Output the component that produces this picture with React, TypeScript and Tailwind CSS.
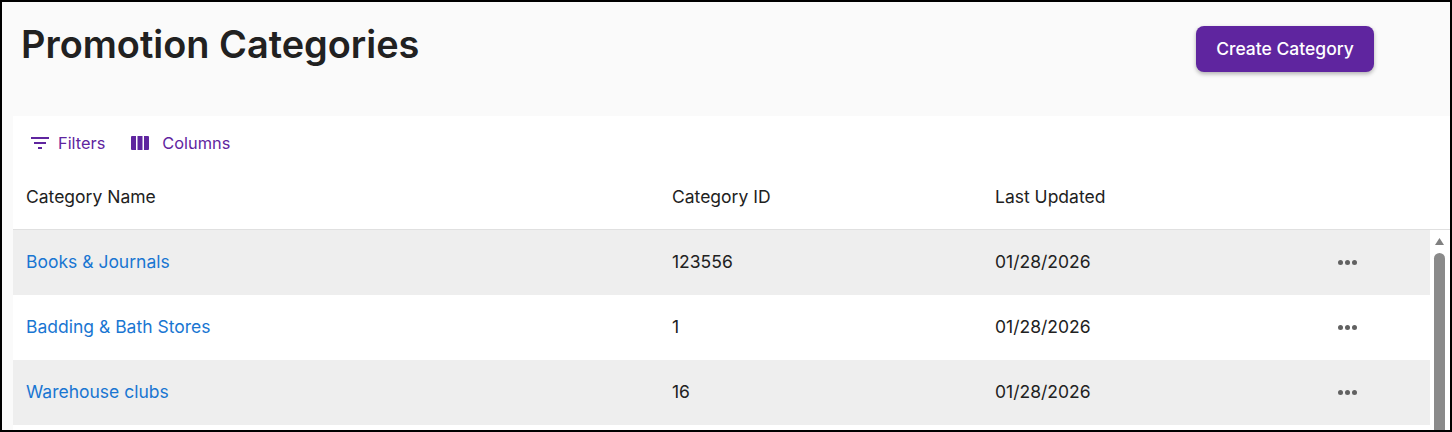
const rows = [
  { name: "Books & Journals", id: "123556", updated: "01/28/2026", shaded: true },
  { name: "Badding & Bath Stores", id: "1", updated: "01/28/2026", shaded: false },
  { name: "Warehouse clubs", id: "16", updated: "01/28/2026", shaded: true },
];

function FilterIcon() {
  return (
    <svg width="18" height="12" viewBox="0 0 18 12" className="fill-[#5f259f]">
      <rect x="0" y="0" width="18" height="2" />
      <rect x="3" y="5" width="12" height="2" />
      <rect x="7" y="10" width="4" height="2" />
    </svg>
  );
}

function ColumnsIcon() {
  return (
    <svg width="18" height="14" viewBox="0 0 18 14" className="fill-[#5f259f]">
      <path d="M0 1a1 1 0 0 1 1-1h4v14H1a1 1 0 0 1-1-1z" />
      <rect x="6.5" y="0" width="5" height="14" />
      <path d="M13 0h4a1 1 0 0 1 1 1v12a1 1 0 0 1-1 1h-4z" />
    </svg>
  );
}

function Dots() {
  return (
    <div className="flex items-center gap-[2px] ml-[1px]">
      <span className="w-[5px] h-[5px] rounded-full bg-[#616161]" />
      <span className="w-[5px] h-[5px] rounded-full bg-[#616161]" />
      <span className="w-[5px] h-[5px] rounded-full bg-[#616161]" />
    </div>
  );
}

export default function App() {
  return (
    <div className="w-[1452px] h-[432px] overflow-hidden border-2 border-black bg-[#fafafa] font-['Inter',sans-serif] text-[#212121]">
      <div className="flex items-start justify-between h-[114px] pl-[19px] pr-[76px]">
        <h1 className="mt-[18px] text-[37.9px] leading-[48px] font-semibold whitespace-nowrap">Promotion Categories</h1>
        <button className="mt-[24px] w-[178px] h-[46px] rounded-[8px] bg-[#5f259f] text-white text-[17.5px] font-medium shadow-[0_2px_4px_rgba(0,0,0,0.3)]">
          Create Category
        </button>
      </div>
      <div className="ml-[11px] bg-white">
        <div className="flex items-center h-[54px] pl-[18px] text-[16.35px] text-[#5f259f]">
          <FilterIcon />
          <span className="ml-[9px]">Filters</span>
          <span className="ml-[26px]"><ColumnsIcon /></span>
          <span className="ml-[13px]">Columns</span>
        </div>
        <div className="flex items-center h-[60px] pb-[4px] border-b border-[#e0e0e0] text-[17.5px]">
          <div className="w-[659px] pl-[13px]">Category Name</div>
          <div className="w-[323px]">Category ID</div>
          <div>Last Updated</div>
        </div>
        <div className="flex">
          <div className="w-[1417px] shrink-0">
            {rows.map((row) => (
              <div key={row.name} className={row.shaded ? "flex items-center h-[65px] bg-[#eeeeee] text-[17.5px]" : "flex items-center h-[65px] bg-white text-[17.5px]"}>
                <div className="w-[659px] pl-[13px] text-[#1976d2]">{row.name}</div>
                <div className="w-[323px]">{row.id}</div>
                <div className="w-[342px]">{row.updated}</div>
                <Dots />
              </div>
            ))}
          </div>
          <div className="flex flex-col items-center w-[19px]">
            <svg width="9" height="7" viewBox="0 0 9 7" className="mt-[8px] fill-[#808080]">
              <path d="M4.5 0l4.5 7H0z" />
            </svg>
            <div className="mt-[8px] w-[11px] h-[200px] rounded-t-full bg-[#8a8a8a]" />
          </div>
        </div>
      </div>
    </div>
  );
}
